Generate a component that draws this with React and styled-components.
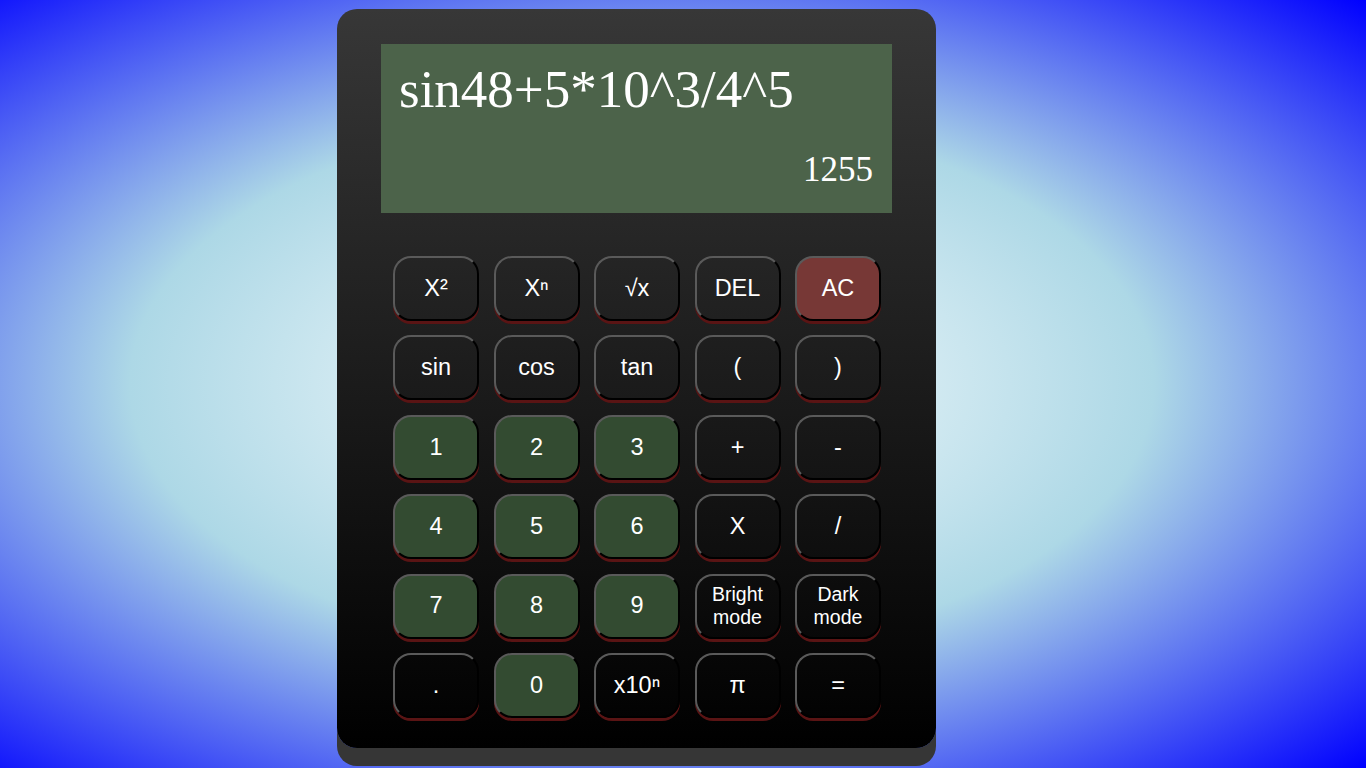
import React from "react";
import styled, { createGlobalStyle, css } from "styled-components";

const GlobalStyle = createGlobalStyle`
  html, body {
    margin: 0;
    padding: 0;
    height: 100%;
  }
  body {
    background: radial-gradient(ellipse at 47% 50%, #ffffff 0%, #add8e6 50%, #0000ff 100%);
    font-family: "Liberation Sans", Arial, sans-serif;
    overflow: hidden;
  }
`;

const Page = styled.main`
  width: 1366px;
  height: 768px;
  padding: 9px 0 0 337px;
  box-sizing: border-box;
`;

const Calculator = styled.div`
  width: 599px;
  box-sizing: border-box;
  padding: 35px 44px 30px;
  border-radius: 20px;
  background: linear-gradient(#373737, #000000);
  box-shadow: 0 18px 0 #363636;
`;

const Display = styled.div`
  height: 169px;
  box-sizing: border-box;
  background: #4c634a;
  color: #ffffff;
  font-family: "Liberation Serif", "Times New Roman", serif;
  display: flex;
  flex-direction: column;
  justify-content: space-between;
  padding: 13px 19px 23px 18px;
`;

const Expression = styled.div`
  font-size: 53px;
  line-height: 64px;
`;

const Result = styled.div`
  font-size: 35px;
  line-height: 40px;
  text-align: right;
`;

const Keypad = styled.div`
  display: grid;
  grid-template-columns: repeat(5, 86px);
  grid-auto-rows: 65px;
  column-gap: 14.5px;
  row-gap: 14.4px;
  padding: 0 11px 0 12px;
  margin-top: 43px;
`;

const variants = {
  plain: css`
    background: transparent;
  `,
  number: css`
    background: #334b31;
  `,
  clear: css`
    background: #773836;
  `,
};

const Key = styled.button`
  box-sizing: border-box;
  border-radius: 18px;
  border: 2px solid;
  border-color: #5a5a5a #000000 #000000 #5a5a5a;
  box-shadow: 0 3px 0 #5a1414;
  color: #ffffff;
  font-family: "Liberation Sans", Arial, sans-serif;
  font-size: ${({ $small }) => ($small ? "19.5px" : "23.5px")};
  line-height: ${({ $small }) => ($small ? "23px" : "1")};
  display: flex;
  align-items: center;
  justify-content: center;
  text-align: center;
  padding: 0;
  cursor: pointer;
  ${({ $variant }) => variants[$variant || "plain"]}
`;

const keys = [
  ["X²"], ["Xⁿ"], ["√x"], ["DEL"], ["AC", "clear"],
  ["sin"], ["cos"], ["tan"], ["("], [")"],
  ["1", "number"], ["2", "number"], ["3", "number"], ["+"], ["-"],
  ["4", "number"], ["5", "number"], ["6", "number"], ["X"], ["/"],
  ["7", "number"], ["8", "number"], ["9", "number"], ["Bright mode", "plain", true], ["Dark mode", "plain", true],
  ["."], ["0", "number"], ["x10ⁿ"], ["π"], ["="],
];

export default function App() {
  return (
    <>
      <GlobalStyle />
      <Page>
        <Calculator>
          <Display>
            <Expression>sin48+5*10^3/4^5</Expression>
            <Result>1255</Result>
          </Display>
          <Keypad>
            {keys.map(([label, variant, small]) => (
              <Key key={label} $variant={variant} $small={small}>
                {small ? (
                  <span>
                    {label.split(" ")[0]}
                    <br />
                    {label.split(" ")[1]}
                  </span>
                ) : (
                  label
                )}
              </Key>
            ))}
          </Keypad>
        </Calculator>
      </Page>
    </>
  );
}
